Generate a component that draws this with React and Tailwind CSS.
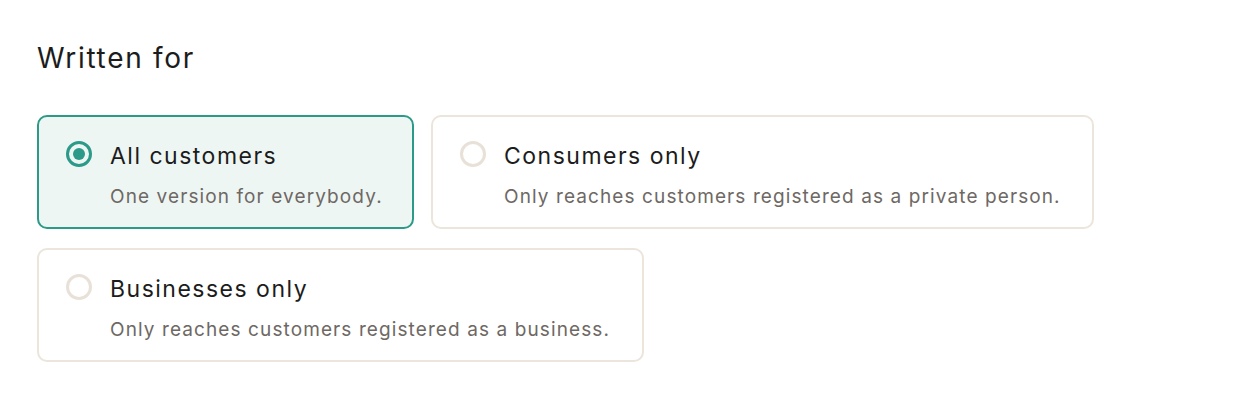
import React, { useState } from 'react'

const options = [
  { id: 'all', title: 'All customers', desc: 'One version for everybody.', w: 'w-[377px]' },
  { id: 'consumers', title: 'Consumers only', desc: 'Only reaches customers registered as a private person.', w: 'w-[663px]' },
  { id: 'business', title: 'Businesses only', desc: 'Only reaches customers registered as a business.', w: 'w-[607px]' },
]

export default function App() {
  const [selected, setSelected] = useState('all')

  return (
    <div className="min-h-[398px] bg-white px-[37px] pt-[40px] font-['Inter',sans-serif]">
      <h2 className="text-[28px] leading-[36px] tracking-[0.06em] text-[#1c1c1c]">Written for</h2>

      <div className="mt-[39px] flex flex-wrap gap-x-[17px] gap-y-[19px]">
        {options.map((o) => {
          const active = selected === o.id
          return (
            <button
              key={o.id}
              onClick={() => setSelected(o.id)}
              className={
                'flex h-[114px] items-start gap-[18px] rounded-[10px] border-2 px-[27px] pt-[25px] text-left ' +
                o.w +
                (active ? ' border-[#2b9a88] bg-[#eef6f4]' : ' border-[#ebe5dc] bg-white')
              }
            >
              <span
                className={
                  '-mt-[1px] flex h-[26px] w-[26px] shrink-0 items-center justify-center rounded-full border-[3px] ' +
                  (active ? 'border-[#2b9a88]' : 'border-[#e8e1d8]')
                }
              >
                {active && <span className="h-[12px] w-[12px] rounded-full bg-[#2b9a88]" />}
              </span>
              <span className="flex flex-col">
                <span className="text-[23px] leading-[28px] tracking-[0.065em] text-[#1c1c1c]">{o.title}</span>
                <span className="mt-[15px] whitespace-nowrap text-[19px] leading-[24px] tracking-[0.058em] text-[#6e6864]">{o.desc}</span>
              </span>
            </button>
          )
        })}
      </div>
    </div>
  )
}
